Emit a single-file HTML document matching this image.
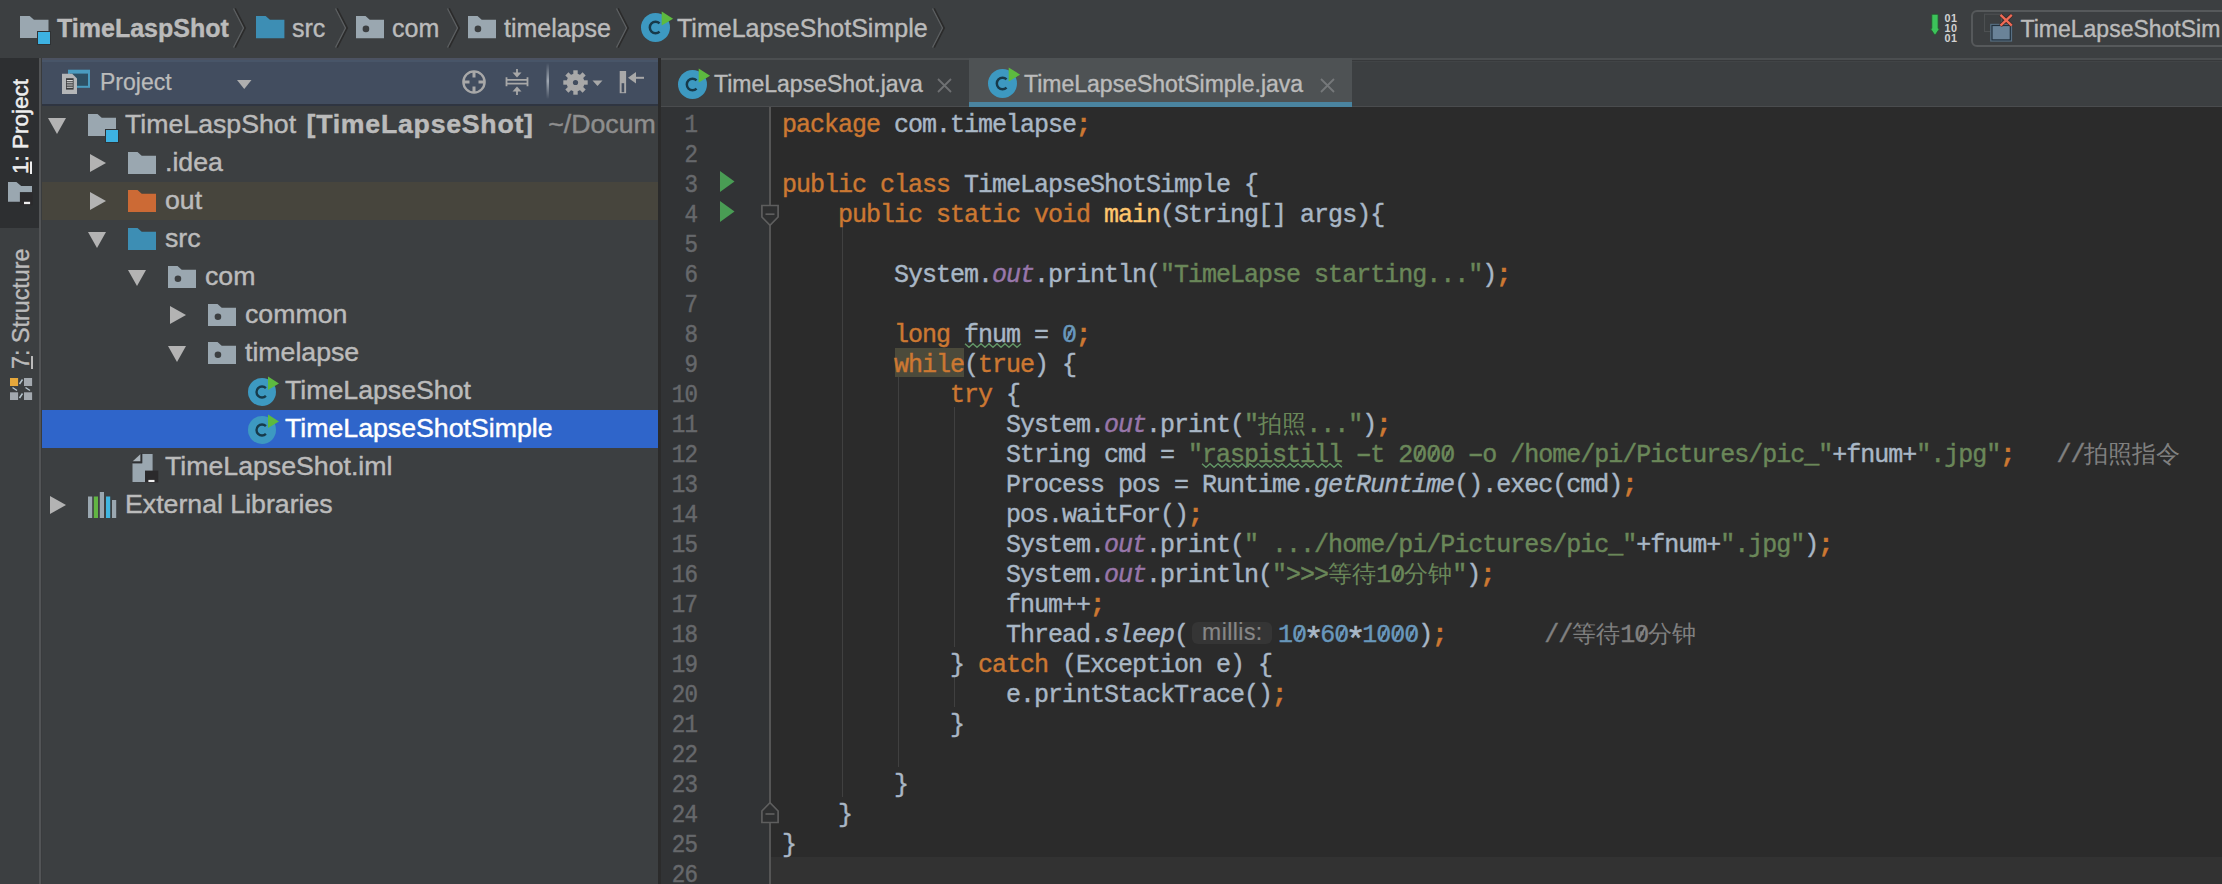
<!DOCTYPE html>
<html><head><meta charset="utf-8"><style>
*{margin:0;padding:0;box-sizing:border-box}
html,body{width:2222px;height:884px;overflow:hidden;background:#3C3F41}
body{position:relative;font-family:"Liberation Sans",sans-serif;color:#BBBBBB}
.a{position:absolute}
svg.i{position:absolute;overflow:visible}
.nt{position:absolute;top:9.5px;font-size:25px;line-height:36px;color:#BBBBBB;white-space:pre;-webkit-text-stroke:0.4px currentColor}
.vt{position:absolute;transform-origin:0 0;transform:rotate(-90deg);font-size:22.5px;line-height:24px;white-space:pre;-webkit-text-stroke:0.2px currentColor}
.row{position:absolute;left:42px;width:616px;height:38px}
.tt{position:absolute;font-size:26.7px;line-height:38px;white-space:pre;color:#BBBBBB;margin-top:-0.8px;-webkit-text-stroke:0.45px currentColor}
.tabt{position:absolute;top:69.5px;font-size:23px;line-height:28px;white-space:pre;color:#BBBBBB;-webkit-text-stroke:0.4px currentColor}
.ln{position:absolute;left:661px;width:36px;text-align:right;font-family:"Liberation Mono",monospace;font-size:25px;letter-spacing:-1px;line-height:30px;color:#66686B;white-space:pre;-webkit-text-stroke:0.45px #66686B;margin-top:3.5px;transform:scaleX(0.9);transform-origin:100% 50%}
.cl{position:absolute;left:782px;font-family:"Liberation Mono",monospace;font-size:25px;letter-spacing:-1px;line-height:30px;color:#A9B7C6;white-space:pre;-webkit-text-stroke:0.42px currentColor;margin-top:3.5px}
.cl span{-webkit-text-stroke:0.42px currentColor}
.k{color:#CC7832}
.s{color:#6A8759}
.n{color:#6897BB}
.f{color:#9876AA;font-style:italic}
.it{font-style:italic}
.m{color:#FFC66D}
.c{color:#808080}
.cj{font-size:23.5px;letter-spacing:0;-webkit-text-stroke:0!important}
.hl{background:#4B4A3B}
.g{position:absolute;width:1px;background:#404040}
.hy{display:inline-block;transform:scaleX(1.7)}
.sc{font-weight:bold}
.z{position:relative}
.z::after{content:"";position:absolute;left:6.6px;top:6.4px;width:1.9px;height:12.5px;background:currentColor;transform:rotate(27deg)}
.ast{display:inline-block;transform:translateY(5px) scale(1.35);transform-origin:50% 40%}
.hint{display:inline-block;position:relative;width:90px;height:10px;-webkit-text-stroke:0!important}
.hint span{position:absolute;left:4.2px;top:-9.5px;width:80.2px;height:21.5px;border-radius:6px;background:#353535;font-family:"Liberation Sans",sans-serif;font-size:23px;letter-spacing:0.45px;line-height:21.5px;color:#878787;text-align:center;-webkit-text-stroke:0.2px #878787!important}
</style></head><body>
<svg width="0" height="0" style="position:absolute"><defs>
<g id="fold"><path d="M0 0h9.5l4 3.8H28V22H0z"/></g>
<g id="cls"><circle cx="14" cy="14" r="14" fill="#3D99C1"/><path d="M17.9 10.1A5.5 5.5 0 1 0 17.9 17.9" fill="none" stroke="#173A4A" stroke-width="2.4"/><path d="M20 -1.5L31 5.5L20 12z" fill="#5DBA3F"/></g>
<g id="arD"><path d="M0 0h18L9 16z" fill="#B3B3B3"/></g>
<g id="arR"><path d="M0 0v18L16 9z" fill="#B3B3B3"/></g>
</defs></svg>
<div class="a" style="left:0px;top:0px;width:2222px;height:58px;background:#3C3F41;"></div>
<svg class="i" style="left:19.5px;top:16px" width="28.5" height="22"><path d="M0 0h9.690000000000001 l4.2749999999999995 3.74 H28.5 V22 H0z" fill="#9AA7B0"/></svg>
<div class="a" style="left:38px;top:31.6px;width:12.2px;height:12.2px;background:#3DB2E2;outline:1px solid #2F3234"></div>
<div class="nt" style="left:57px;font-weight:bold">TimeLaspShot</div>
<svg class="i" style="left:234px;top:8px" width="14" height="40"><path d="M1 0.5L11 20L1 39.5" fill="none" stroke="#2B2B2B" stroke-width="2"/><path d="M-0.5 0.5L9.5 20L-0.5 39.5" fill="none" stroke="#5C5F61" stroke-width="1.3"/></svg>
<svg class="i" style="left:255.8px;top:15.8px" width="28.4" height="22.2"><path d="M0 0h9.656 l4.26 3.774 H28.4 V22.2 H0z" fill="#3D8EB4"/></svg>
<div class="nt" style="left:292px">src</div>
<svg class="i" style="left:336px;top:8px" width="14" height="40"><path d="M1 0.5L11 20L1 39.5" fill="none" stroke="#2B2B2B" stroke-width="2"/><path d="M-0.5 0.5L9.5 20L-0.5 39.5" fill="none" stroke="#5C5F61" stroke-width="1.3"/></svg>
<svg class="i" style="left:355.8px;top:15.8px" width="28" height="22.2"><path d="M0 0h9.520000000000001 l4.2 3.774 H28 V22.2 H0z" fill="#9AA7B0"/><circle cx="9.94" cy="12.876" r="3.3" fill="#3C3F41"/></svg>
<div class="nt" style="left:392px">com</div>
<svg class="i" style="left:448px;top:8px" width="14" height="40"><path d="M1 0.5L11 20L1 39.5" fill="none" stroke="#2B2B2B" stroke-width="2"/><path d="M-0.5 0.5L9.5 20L-0.5 39.5" fill="none" stroke="#5C5F61" stroke-width="1.3"/></svg>
<svg class="i" style="left:468px;top:15.8px" width="28" height="22.2"><path d="M0 0h9.520000000000001 l4.2 3.774 H28 V22.2 H0z" fill="#9AA7B0"/><circle cx="9.94" cy="12.876" r="3.3" fill="#3C3F41"/></svg>
<div class="nt" style="left:504px">timelapse</div>
<svg class="i" style="left:617px;top:8px" width="14" height="40"><path d="M1 0.5L11 20L1 39.5" fill="none" stroke="#2B2B2B" stroke-width="2"/><path d="M-0.5 0.5L9.5 20L-0.5 39.5" fill="none" stroke="#5C5F61" stroke-width="1.3"/></svg>
<svg class="i" style="left:640.5px;top:13.0px" width="1" height="1"><g transform="scale(1.0357142857142858)"><use href="#cls"/></g></svg>
<div class="nt" style="left:677px">TimeLapseShotSimple</div>
<svg class="i" style="left:933px;top:8px" width="14" height="40"><path d="M1 0.5L11 20L1 39.5" fill="none" stroke="#2B2B2B" stroke-width="2"/><path d="M-0.5 0.5L9.5 20L-0.5 39.5" fill="none" stroke="#5C5F61" stroke-width="1.3"/></svg>
<svg class="i" style="left:1926px;top:12px" width="34" height="32"><path d="M5.8 2.3h6.3v14.1h1.6L9 23.3L4.3 16.4h1.5z" fill="#3CC35A" stroke="#24552F" stroke-width="0.8"/></svg>
<div class="a" style="left:1944.5px;top:13px;width:14px;font-family:&quot;Liberation Sans&quot;,sans-serif;font-weight:bold;font-size:10.8px;line-height:10.2px;letter-spacing:0.4px;color:#D2D2D2;white-space:pre">01
10
01</div>
<div class="a" style="left:1971px;top:9.8px;width:300px;height:37.4px;border:2px solid #56595B;border-radius:6px"></div>
<svg class="i" style="left:1984px;top:13px" width="32" height="32"><rect x="0.5" y="1.2" width="17" height="17.3" fill="none" stroke="#4D5052" stroke-width="1.1"/><rect x="6.2" y="10.8" width="21.9" height="17.8" fill="#587084"/><rect x="8" y="12.5" width="18.3" height="14.4" fill="#6A8398" stroke="#22313C" stroke-width="1.2"/><path d="M16.5 1.8L27.8 12.6M27.8 1.8L16.5 12.6" stroke="#3A2525" stroke-width="3.6"/><path d="M16.5 1.8L27.8 12.6M27.8 1.8L16.5 12.6" stroke="#EE6A55" stroke-width="2.3"/></svg>
<div class="nt" style="left:2020.5px;top:10.6px;font-size:23px">TimeLapseShotSim</div>
<div class="a" style="left:0px;top:58px;width:40px;height:826px;background:#3C3F41;"></div>
<div class="a" style="left:0px;top:58px;width:38.5px;height:170px;background:#2D2F31;"></div>
<div class="a" style="left:38.5px;top:58px;width:2.5px;height:826px;background:#525456;"></div>
<div class="a" style="left:41px;top:58px;width:1.5px;height:826px;background:#393B3D;"></div>
<div class="vt" style="left:9px;top:174px;color:#EEEEEE;-webkit-text-stroke:0.5px #EEEEEE"><span style="text-decoration:underline;text-decoration-thickness:1.5px;text-underline-offset:2px">1</span>: Project</div>
<svg class="i" style="left:8px;top:182px" width="25" height="24"><path d="M0 0H8.4L13.2 4H24V19.8H0z" fill="#9AA7B0"/><rect x="11.9" y="10.1" width="12.7" height="13.1" fill="#2B2A2C"/><rect x="16" y="19.8" width="6.1" height="2.3" fill="#EEEEEE"/></svg>
<div class="vt" style="left:9px;top:369px;color:#BBBBBB;font-size:23.3px;-webkit-text-stroke:0.4px #BBBBBB"><span style="text-decoration:underline;text-decoration-thickness:1.5px;text-underline-offset:2px">7</span>: Structure</div>
<svg class="i" style="left:10px;top:378px" width="23" height="22"><rect x="0" y="0" width="8.1" height="8" fill="#E6A83C"/><rect x="14" y="0" width="8.1" height="8" fill="#A3A9AF"/><rect x="0" y="14.3" width="8.1" height="7.7" fill="#A3A9AF"/><rect x="14" y="14.3" width="8.1" height="7.7" fill="#A3A9AF"/><path d="M9.5 6L12.5 1.5M2.5 9.5L7 12.5M15.5 9.5L20 12.5M9.5 20L12.5 15.5" stroke="#B5C3CC" stroke-width="1.5"/></svg>
<div class="a" style="left:42px;top:104px;width:616px;height:780px;background:#3C3F41;"></div>
<div class="a" style="left:42px;top:58px;width:616px;height:46px;background:#424D5F;"></div>
<div class="a" style="left:42px;top:57.7px;width:616px;height:2px;background:#4C5261;"></div>
<div class="a" style="left:42px;top:59.7px;width:616px;height:2.8px;background:#485568;"></div>
<div class="a" style="left:42px;top:103.5px;width:616px;height:2.3px;background:#2F3541;"></div>
<svg class="i" style="left:61px;top:69px" width="30" height="26"><rect x="7" y="0.7" width="22" height="18.1" fill="#4A9CC0"/><rect x="9" y="4.6" width="18" height="12.2" fill="#2E5064"/><path d="M1 4.8h10.2l4.8 4.8V25H1z" fill="#B4B6B8"/><rect x="5" y="9.2" width="7.6" height="11.4" fill="#3B3C3E"/><path d="M5.8 11.6h6M5.8 13.8h6M5.8 16h6M5.8 18.2h6" stroke="#D8D8D8" stroke-width="1.1"/></svg>
<div class="a" style="left:100px;top:67.5px;font-size:23px;line-height:28px;color:#BBBBBB;-webkit-text-stroke:0.25px currentColor">Project</div>
<svg class="i" style="left:237px;top:79.5px" width="15" height="9"><path d="M0 0h14.5L7.25 9z" fill="#AFAFAF"/></svg>
<svg class="i" style="left:462px;top:70px" width="24" height="24"><circle cx="12" cy="12" r="10.6" fill="none" stroke="#A8A8A8" stroke-width="2.4"/><path d="M12 1v6.5M12 16.5v6.5M1 12h6.5M16.5 12h6.5" stroke="#A8A8A8" stroke-width="3"/></svg>
<svg class="i" style="left:505px;top:68px" width="24" height="28"><path d="M1.5 11.8h21M1.5 15.7h21" stroke="#A8A8A8" stroke-width="1.7"/><path d="M1.5 9.3v9M22.5 9.3v9" stroke="#A8A8A8" stroke-width="1.8"/><path d="M12 1v4" stroke="#A8A8A8" stroke-width="1.8"/><path d="M7.5 4.5h9L12 9.5z" fill="#A8A8A8"/><path d="M12 27v-4" stroke="#A8A8A8" stroke-width="1.8"/><path d="M7.5 23.5h9L12 18.5z" fill="#A8A8A8"/></svg>
<svg class="i" style="left:546px;top:63px" width="4" height="36"><defs><linearGradient id="sepg" x1="0" y1="0" x2="0" y2="1"><stop offset="0" stop-color="#424D5F"/><stop offset="0.5" stop-color="#A0A8B2"/><stop offset="1" stop-color="#424D5F"/></linearGradient></defs><rect x="0.5" y="0" width="2.5" height="36" fill="url(#sepg)"/></svg>
<svg class="i" style="left:563px;top:69.5px" width="42" height="26"><g fill="#A8A8A8" transform="translate(12.5,12.5)"><circle r="9"/><rect x="-2.2" y="-12.2" width="4.4" height="24.4"/><rect x="-12.2" y="-2.2" width="24.4" height="4.4"/><rect x="-2.2" y="-12.2" width="4.4" height="24.4" transform="rotate(45)"/><rect x="-2.2" y="-12.2" width="4.4" height="24.4" transform="rotate(-45)"/></g><circle cx="12.5" cy="12.5" r="2.6" fill="#424D5F"/><path d="M29.5 10.5h10l-5 5.5z" fill="#A8A8A8"/></svg>
<svg class="i" style="left:619px;top:70px" width="28" height="26"><rect x="0.7" y="1" width="6.4" height="22.2" fill="#A8A8A8"/><rect x="2.6" y="13.2" width="2.6" height="9" fill="#424D5F"/><path d="M25 7.8H13" stroke="#A8A8A8" stroke-width="2"/><path d="M9 7.8L17 2v11.6z" fill="#A8A8A8"/></svg>
<div class="a" style="left:42px;top:182px;width:616px;height:38px;background:#47453D;"></div>
<div class="a" style="left:42px;top:410px;width:616px;height:38px;background:#2F65CA;"></div>
<svg class="i" style="left:48px;top:118px" width="18" height="16"><path d="M0 0h18L9 16z" fill="#B3B3B3"/></svg>
<svg class="i" style="left:88px;top:114px" width="28" height="22"><path d="M0 0h9.520000000000001 l4.2 3.74 H28 V22 H0z" fill="#9AA7B0"/></svg>
<div class="a" style="left:106px;top:129.8px;width:12px;height:12.2px;background:#3DB2E2;outline:1px solid #2F3234"></div>
<div class="tt" style="left:125px;top:106px">TimeLaspShot <b style="letter-spacing:0.75px;margin-left:3px">[TimeLapseShot]</b> <span style="color:#8E8E8E;margin-left:7px">~/Docum</span></div>
<svg class="i" style="left:89.5px;top:154px" width="16" height="18"><path d="M0 0v18L16 9z" fill="#B3B3B3"/></svg>
<svg class="i" style="left:128px;top:152px" width="28" height="22"><path d="M0 0h9.520000000000001 l4.2 3.74 H28 V22 H0z" fill="#9AA7B0"/></svg>
<div class="tt" style="left:165px;top:144px">.idea</div>
<svg class="i" style="left:89.5px;top:192px" width="16" height="18"><path d="M0 0v18L16 9z" fill="#B3B3B3"/></svg>
<svg class="i" style="left:128px;top:190px" width="28" height="22"><path d="M0 0h9.520000000000001 l4.2 3.74 H28 V22 H0z" fill="#CC6A35"/></svg>
<div class="tt" style="left:165px;top:182px">out</div>
<svg class="i" style="left:88px;top:232px" width="18" height="16"><path d="M0 0h18L9 16z" fill="#B3B3B3"/></svg>
<svg class="i" style="left:128px;top:228px" width="28" height="22"><path d="M0 0h9.520000000000001 l4.2 3.74 H28 V22 H0z" fill="#3D8EB4"/></svg>
<div class="tt" style="left:165px;top:220px">src</div>
<svg class="i" style="left:128px;top:270px" width="18" height="16"><path d="M0 0h18L9 16z" fill="#B3B3B3"/></svg>
<svg class="i" style="left:168px;top:266px" width="28" height="22"><path d="M0 0h9.520000000000001 l4.2 3.74 H28 V22 H0z" fill="#9AA7B0"/><circle cx="9.94" cy="12.76" r="3.3" fill="#3C3F41"/></svg>
<div class="tt" style="left:205px;top:258px">com</div>
<svg class="i" style="left:169.5px;top:306px" width="16" height="18"><path d="M0 0v18L16 9z" fill="#B3B3B3"/></svg>
<svg class="i" style="left:208px;top:304px" width="28" height="22"><path d="M0 0h9.520000000000001 l4.2 3.74 H28 V22 H0z" fill="#9AA7B0"/><circle cx="9.94" cy="12.76" r="3.3" fill="#3C3F41"/></svg>
<div class="tt" style="left:245px;top:296px">common</div>
<svg class="i" style="left:168px;top:346px" width="18" height="16"><path d="M0 0h18L9 16z" fill="#B3B3B3"/></svg>
<svg class="i" style="left:208px;top:342px" width="28" height="22"><path d="M0 0h9.520000000000001 l4.2 3.74 H28 V22 H0z" fill="#9AA7B0"/><circle cx="9.94" cy="12.76" r="3.3" fill="#3C3F41"/></svg>
<div class="tt" style="left:245px;top:334px">timelapse</div>
<svg class="i" style="left:248px;top:377.5px" width="1" height="1"><g transform="scale(1.0)"><use href="#cls"/></g></svg>
<div class="tt" style="left:285px;top:372px">TimeLapseShot</div>
<svg class="i" style="left:248px;top:415.5px" width="1" height="1"><g transform="scale(1.0)"><use href="#cls"/></g></svg>
<div class="tt" style="left:285px;top:410px;color:#FFFFFF">TimeLapseShotSimple</div>
<svg class="i" style="left:131.5px;top:453px" width="27" height="30"><path d="M10.2 0.9H20.6V28.9H0.5V10.2H10.2z" fill="#9AA7B0"/><path d="M0.5 8.6L8.6 0.9V8.6z" fill="#A9B3BA"/><path d="M9.4 0.3V9.4H0.3" fill="none" stroke="#2E3033" stroke-width="1.6"/><rect x="13" y="17.6" width="13.3" height="11.8" fill="#2B2A2C"/><rect x="16.4" y="26.9" width="6.1" height="2.1" fill="#EEEEEE"/></svg>
<div class="tt" style="left:165px;top:448px">TimeLapseShot.iml</div>
<svg class="i" style="left:49.5px;top:496px" width="16" height="18"><path d="M0 0v18L16 9z" fill="#B3B3B3"/></svg>
<svg class="i" style="left:88px;top:492px" width="29" height="26"><rect x="0" y="4.5" width="4.2" height="21.5" fill="#9AA7B0"/><rect x="5.8" y="4.5" width="4.2" height="21.5" fill="#62B543"/><rect x="11.8" y="0" width="4.2" height="26" fill="#9AA7B0"/><rect x="18" y="4.5" width="4.2" height="21.5" fill="#40B6E0"/><rect x="24" y="8" width="4.2" height="18" fill="#9AA7B0"/></svg>
<div class="tt" style="left:125px;top:486px">External Libraries</div>
<div class="a" style="left:658px;top:58px;width:2.5px;height:826px;background:#2B2B2B;"></div>
<div class="a" style="left:660.5px;top:58px;width:1562px;height:49px;background:#3C3F41;"></div>
<div class="a" style="left:661px;top:57.6px;width:1561px;height:2px;background:#4B4E50;"></div>
<div class="a" style="left:661px;top:60.2px;width:1561px;height:1px;background:#37393B;"></div>
<div class="a" style="left:661px;top:61.2px;width:1561px;height:1px;background:#414446;"></div>
<div class="a" style="left:661px;top:106px;width:1561px;height:1.5px;background:#4A4C4E;"></div>
<div class="a" style="left:661px;top:59.5px;width:308px;height:46.5px;background:#3C3F41;"></div>
<div class="a" style="left:969px;top:58px;width:383px;height:48px;background:#4E5254;"></div>
<div class="a" style="left:969px;top:102px;width:383px;height:5px;background:#4A84A0;"></div>
<svg class="i" style="left:677.5px;top:69.5px" width="1" height="1"><g transform="scale(1.0357142857142858)"><use href="#cls"/></g></svg>
<div class="tabt" style="left:714px">TimeLapseShot.java</div>
<svg class="i" style="left:937px;top:78px" width="15" height="15"><path d="M1 1L14 14M14 1L1 14" stroke="#6E7072" stroke-width="1.8"/></svg>
<svg class="i" style="left:987.5px;top:68.5px" width="1" height="1"><g transform="scale(1.0357142857142858)"><use href="#cls"/></g></svg>
<div class="tabt" style="left:1024px">TimeLapseShotSimple.java</div>
<svg class="i" style="left:1320px;top:78px" width="15" height="15"><path d="M1 1L14 14M14 1L1 14" stroke="#75787A" stroke-width="1.8"/></svg>
<div class="a" style="left:661px;top:107px;width:110px;height:777px;background:#313335;"></div>
<div class="a" style="left:771px;top:107px;width:1451px;height:777px;background:#2B2B2B;"></div>
<div class="a" style="left:771px;top:857px;width:1451px;height:27px;background:#323232;"></div>
<div class="a" style="left:769px;top:107px;width:2px;height:777px;background:#555555;"></div>
<div class="a" style="left:894.5px;top:347.5px;width:69.5px;height:29.5px;background:#4B4A3B;"></div>
<div class="g" style="left:841.5px;top:227px;height:570px"></div>
<div class="g" style="left:897.5px;top:377px;height:390px"></div>
<div class="g" style="left:953.5px;top:407px;height:240px"></div>
<div class="g" style="left:953.5px;top:677px;height:30px"></div>
<svg class="i" style="left:720px;top:171px" width="15" height="21"><path d="M0 0L14.5 10.5L0 21z" fill="#499C54"/></svg>
<svg class="i" style="left:720px;top:201px" width="15" height="21"><path d="M0 0L14.5 10.5L0 21z" fill="#499C54"/></svg>
<svg class="i" style="left:761px;top:204px" width="18" height="24"><path d="M0.9 1.5h16.2v11.5l-8.1 8.4l-8.1-8.4z" fill="#2E2F30" stroke="#5E5E5E" stroke-width="1.7"/><path d="M4.5 10.2h9" stroke="#5E5E5E" stroke-width="1.7"/></svg>
<svg class="i" style="left:761px;top:801px" width="18" height="24"><path d="M0.9 21.5h16.2V10l-8.1-8.4l-8.1 8.4z" fill="#2E2F30" stroke="#5E5E5E" stroke-width="1.7"/><path d="M4.5 13h9" stroke="#5E5E5E" stroke-width="1.7"/></svg>
<div class="ln" style="top:107px">1</div>
<div class="cl" style="top:107px"><span class="k">package</span> com.timelapse<span class="k sc">;</span></div>
<div class="ln" style="top:137px">2</div>
<div class="ln" style="top:167px">3</div>
<div class="cl" style="top:167px"><span class="k">public class</span> TimeLapseShotSimple {</div>
<div class="ln" style="top:197px">4</div>
<div class="cl" style="top:197px">    <span class="k">public static void</span> <span class="m">main</span>(String[] args){</div>
<div class="ln" style="top:227px">5</div>
<div class="ln" style="top:257px">6</div>
<div class="cl" style="top:257px">        System.<span class="f">out</span>.println(<span class="s">"TimeLapse starting..."</span>)<span class="k sc">;</span></div>
<div class="ln" style="top:287px">7</div>
<div class="ln" style="top:317px">8</div>
<div class="cl" style="top:317px">        <span class="k">long</span> <span class="wv">fnum</span> = <span class="n"><span class="z">0</span></span><span class="k sc">;</span></div>
<div class="ln" style="top:347px">9</div>
<div class="cl" style="top:347px">        <span class="k">while</span>(<span class="k">true</span>) {</div>
<div class="ln" style="top:377px">10</div>
<div class="cl" style="top:377px">            <span class="k">try</span> {</div>
<div class="ln" style="top:407px">11</div>
<div class="cl" style="top:407px">                System.<span class="f">out</span>.print(<span class="s">"<span class="cj">拍照</span>..."</span>)<span class="k sc">;</span></div>
<div class="ln" style="top:437px">12</div>
<div class="cl" style="top:437px">                String cmd = <span class="s">"<span class="wv">raspistill</span> <span class="hy">-</span>t 2<span class="z">0</span><span class="z">0</span><span class="z">0</span> <span class="hy">-</span>o /home/pi/Pictures/pic_"</span>+fnum+<span class="s">".jpg"</span><span class="k sc">;</span>   <span class="c">//<span class="cj">拍照指令</span></span></div>
<div class="ln" style="top:467px">13</div>
<div class="cl" style="top:467px">                Process pos = Runtime.<span class="it">getRuntime</span>().exec(cmd)<span class="k sc">;</span></div>
<div class="ln" style="top:497px">14</div>
<div class="cl" style="top:497px">                pos.waitFor()<span class="k sc">;</span></div>
<div class="ln" style="top:527px">15</div>
<div class="cl" style="top:527px">                System.<span class="f">out</span>.print(<span class="s">" .../home/pi/Pictures/pic_"</span>+fnum+<span class="s">".jpg"</span>)<span class="k sc">;</span></div>
<div class="ln" style="top:557px">16</div>
<div class="cl" style="top:557px">                System.<span class="f">out</span>.println(<span class="s">"&gt;&gt;&gt;<span class="cj">等待</span>1<span class="z">0</span><span class="cj">分钟</span>"</span>)<span class="k sc">;</span></div>
<div class="ln" style="top:587px">17</div>
<div class="cl" style="top:587px">                fnum++<span class="k sc">;</span></div>
<div class="ln" style="top:617px">18</div>
<div class="cl" style="top:617px">                Thread.<span class="it">sleep</span>(<span class="hint"><span>millis:</span></span><span class="n">1<span class="z">0</span></span><span class="ast">*</span><span class="n">6<span class="z">0</span></span><span class="ast">*</span><span class="n">1<span class="z">0</span><span class="z">0</span><span class="z">0</span></span>)<span class="k sc">;</span>       <span class="c">//<span class="cj">等待</span>1<span class="z">0</span><span class="cj">分钟</span></span></div>
<div class="ln" style="top:647px">19</div>
<div class="cl" style="top:647px">            } <span class="k">catch</span> (Exception e) {</div>
<div class="ln" style="top:677px">20</div>
<div class="cl" style="top:677px">                e.printStackTrace()<span class="k sc">;</span></div>
<div class="ln" style="top:707px">21</div>
<div class="cl" style="top:707px">            }</div>
<div class="ln" style="top:737px">22</div>
<div class="ln" style="top:767px">23</div>
<div class="cl" style="top:767px">        }</div>
<div class="ln" style="top:797px">24</div>
<div class="cl" style="top:797px">    }</div>
<div class="ln" style="top:827px">25</div>
<div class="cl" style="top:827px">}</div>
<div class="ln" style="top:857px">26</div>
<svg class="i" style="left:965px;top:343px" width="56" height="6"><polyline points="0.0,0.7 4.0,4.3 8.0,0.7 12.0,4.3 16.0,0.7 20.0,4.3 24.0,0.7 28.0,4.3 32.0,0.7 36.0,4.3 40.0,0.7 44.0,4.3 48.0,0.7 52.0,4.3 56.0,0.7" fill="none" stroke="#629566" stroke-width="1.4"/></svg>
<svg class="i" style="left:1202px;top:463px" width="140" height="6"><polyline points="0.0,0.7 4.0,4.3 8.0,0.7 12.0,4.3 16.0,0.7 20.0,4.3 24.0,0.7 28.0,4.3 32.0,0.7 36.0,4.3 40.0,0.7 44.0,4.3 48.0,0.7 52.0,4.3 56.0,0.7 60.0,4.3 64.0,0.7 68.0,4.3 72.0,0.7 76.0,4.3 80.0,0.7 84.0,4.3 88.0,0.7 92.0,4.3 96.0,0.7 100.0,4.3 104.0,0.7 108.0,4.3 112.0,0.7 116.0,4.3 120.0,0.7 124.0,4.3 128.0,0.7 132.0,4.3 136.0,0.7 140.0,4.3" fill="none" stroke="#629566" stroke-width="1.4"/></svg>
</body></html>
